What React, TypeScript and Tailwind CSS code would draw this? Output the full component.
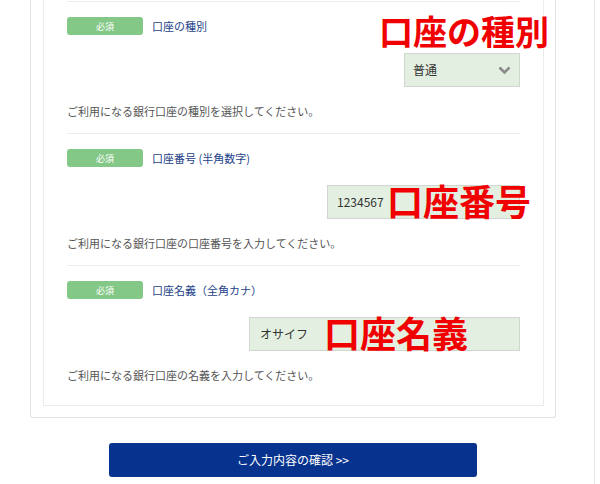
import React from "react";

const jp = "font-['Noto_Sans_CJK_JP','Noto_Sans',sans-serif]";

function Badge() {
  return (
    <span className="flex h-[18px] w-[76px] shrink-0 items-center justify-center rounded-[3px] bg-[#84c887] text-[9px] leading-none text-white">
      必須
    </span>
  );
}

function Field({
  label,
  note,
  children,
  last,
}: {
  label: string;
  note: string;
  children: React.ReactNode;
  last?: boolean;
}) {
  return (
    <div className={"border-t border-[#ececec] pt-[15px] " + (last ? "pb-[23px]" : "pb-[15px]")}>
      <div className="flex h-[18px] items-center gap-[9px]">
        <Badge />
        <span className="text-[11px] leading-none text-[#1d4289]">{label}</span>
      </div>
      <div className="mt-[18px] flex h-[34px] justify-end">{children}</div>
      <p className="mt-[17px] text-[11px] leading-[14px] text-[#555]">{note}</p>
    </div>
  );
}

export default function App() {
  return (
    <div className={"relative h-[484px] w-[600px] overflow-hidden bg-white " + jp}>
      <div className="h-full w-[595px] border-r border-[#e6e6e6]">
        {/* outer panel */}
        <div className="ml-[30px] w-[526px] rounded-b-[3px] border-x border-b border-[#e3e3e3] px-[12px] pb-[11px]">
          {/* inner panel */}
          <div className="w-[501px] border-x border-b border-[#ececec] px-[23px] pt-[1px]">
            <Field label="口座の種別" note="ご利用になる銀行口座の種別を選択してください。">
              <div className="flex w-[116px] items-center justify-between border border-[#d2d6d0] bg-[#e3efe1] pl-[8px] pr-[8px]">
                <span className="text-[12px] text-[#333]">普通</span>
                <svg width="13" height="9" viewBox="0 0 13 9" fill="none">
                  <polyline points="1.5,1.5 6.5,6.5 11.5,1.5" stroke="#8a8a8a" strokeWidth="2.6" />
                </svg>
              </div>
            </Field>
            <Field label="口座番号 (半角数字)" note="ご利用になる銀行口座の口座番号を入力してください。">
              <div className="flex w-[193px] items-center border border-[#d2d6d0] bg-[#e3efe1] pl-[9px]">
                <span className="text-[12px] text-[#333]">1234567</span>
              </div>
            </Field>
            <Field label="口座名義（全角カナ）" note="ご利用になる銀行口座の名義を入力してください。" last>
              <div className="flex w-[271px] items-center border border-[#d2d6d0] bg-[#e3efe1] pl-[10px]">
                <span className="text-[12px] text-[#333]">オサイフ</span>
              </div>
            </Field>
          </div>
        </div>

        <div className="ml-[30px] mt-[25px] flex w-[526px] justify-center">
          <button className="flex h-[34px] w-[368px] items-center justify-center rounded-[3px] bg-[#07338f] text-[12px] text-white">
            ご入力内容の確認 &gt;&gt;
          </button>
        </div>
      </div>

      {/* red annotations */}
      <span className="absolute left-[379px] top-[14px] text-[34px] font-bold leading-none text-[#f00000]">口座の種別</span>
      <span className="absolute left-[387px] top-[182px] text-[36px] font-bold leading-none text-[#f00000]">口座番号</span>
      <span className="absolute left-[324px] top-[314px] text-[36px] font-bold leading-none text-[#f00000]">口座名義</span>
    </div>
  );
}
